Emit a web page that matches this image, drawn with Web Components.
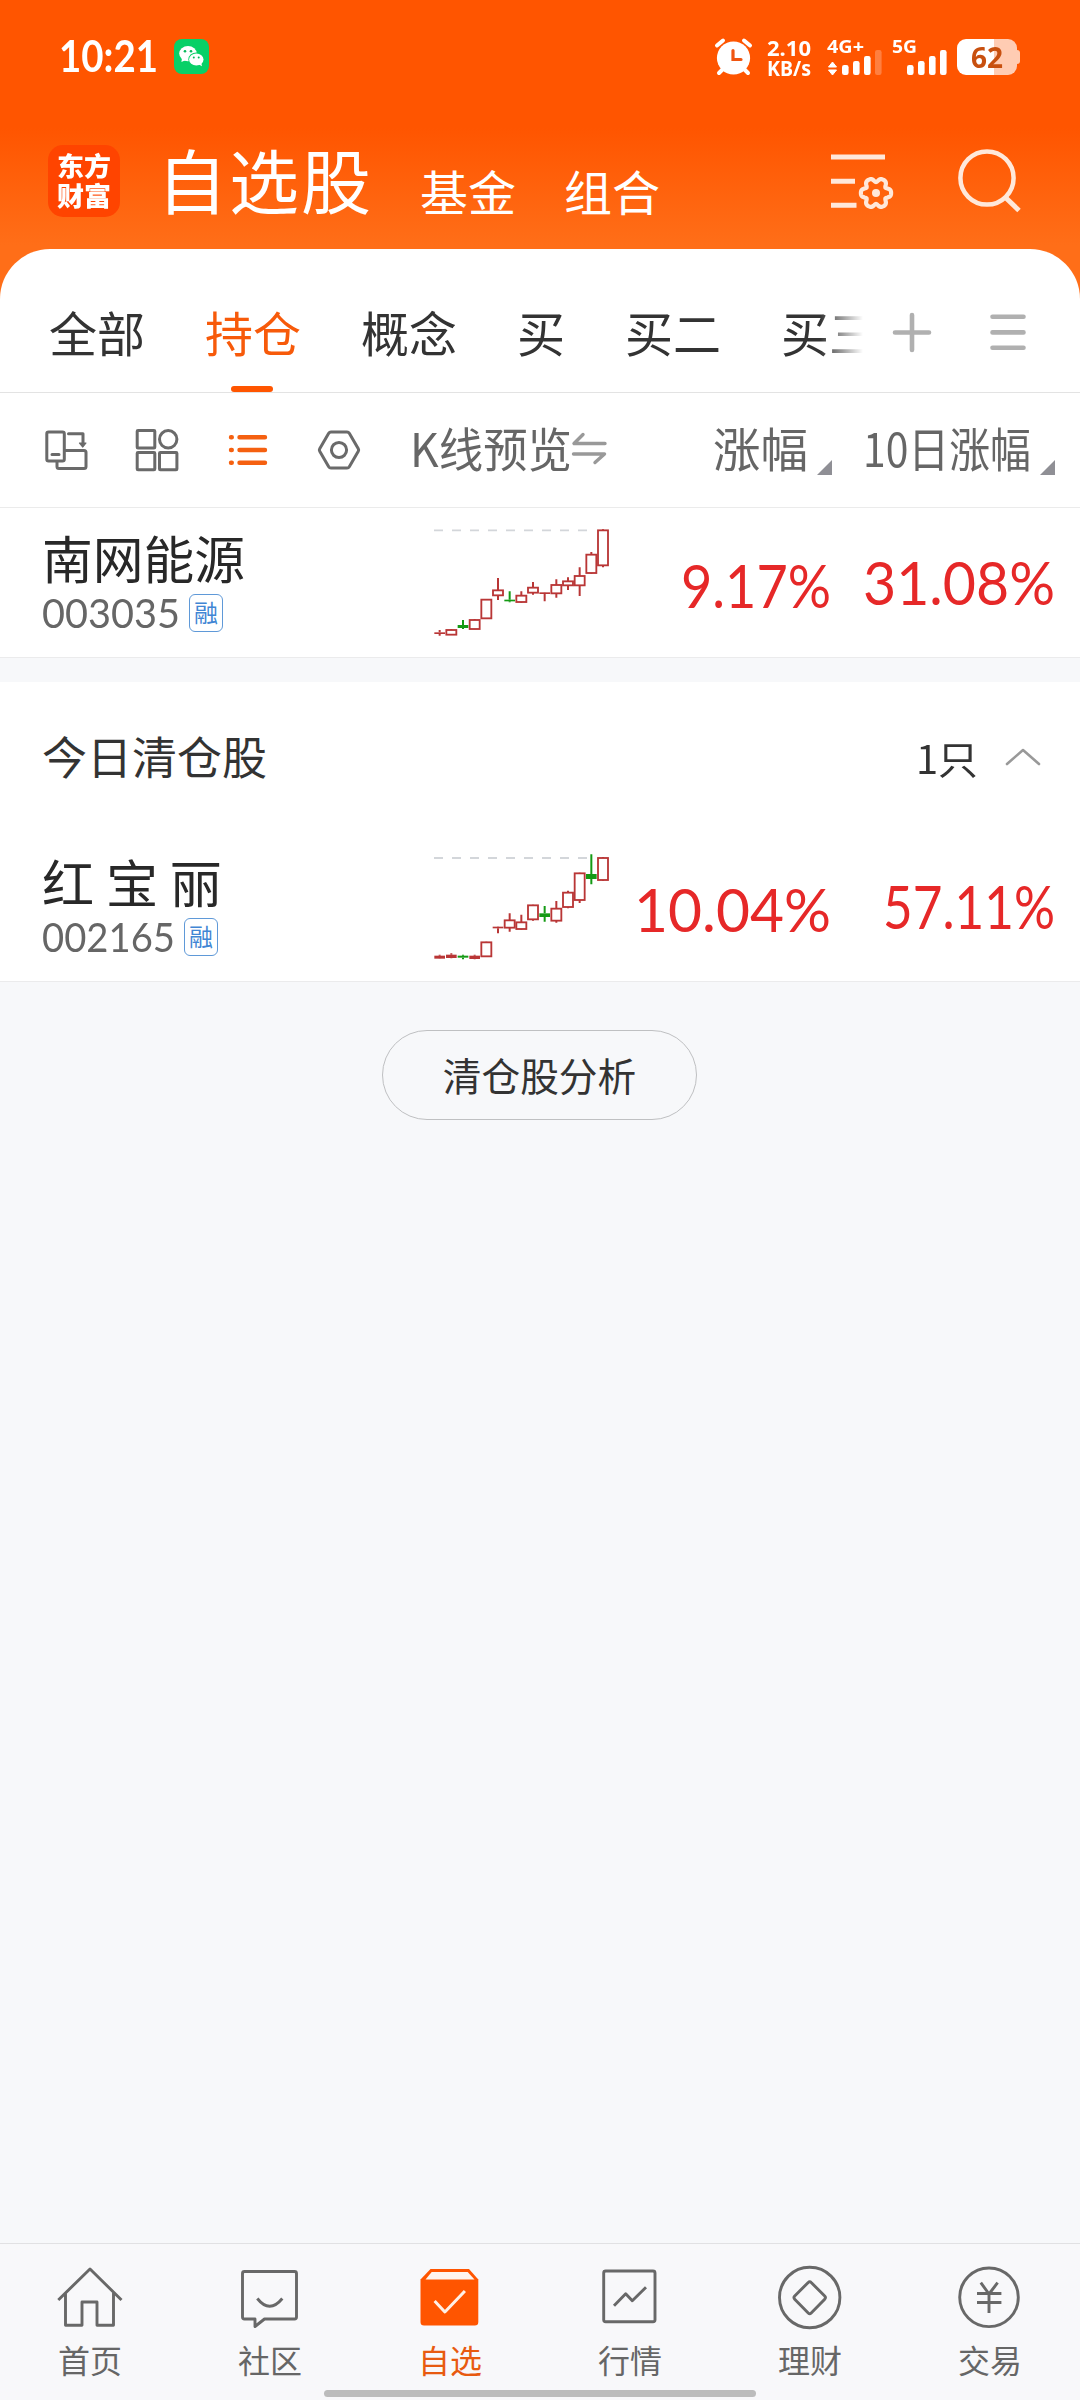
<!DOCTYPE html>
<html lang="zh-CN">
<head>
<meta charset="utf-8">
<title>自选股</title>
<style>
html,body{margin:0;padding:0}
body{width:1080px;height:2400px;overflow:hidden;background:#f7f8fa;font-family:"Noto Sans CJK SC",sans-serif;color:#333}
</style>
</head>
<body>
<stock-app></stock-app>
<script>
const CJK = '"Noto Sans CJK SC",sans-serif';
const BASE = `*{box-sizing:border-box}svg{display:block;flex:none;fill:none}`;
const ico = (x, y, w, h, body, attrs = '') =>
  `<svg width="${w}" height="${h}" viewBox="${x} ${y} ${w} ${h}" ${attrs}>${body}</svg>`;
const define = (name, html, after) => customElements.define(name, class extends HTMLElement {
  connectedCallback() {
    if (this.shadowRoot) return;
    this.attachShadow({ mode: 'open' }).innerHTML = typeof html === 'function' ? html(this) : html;
    if (after) after(this);
  }
});

/* One line of text stretched or condensed to a fixed width */
define('fit-text', el => `<style>:host{display:block;flex:none;width:${el.getAttribute('w')}px;white-space:nowrap;overflow:visible}
span{display:inline-block;transform-origin:0 50%}</style><span><slot></slot></span>`, el => {
  const s = el.shadowRoot.querySelector('span');
  const n = s.getBoundingClientRect().width;
  if (n) s.style.transform = `scaleX(${+el.getAttribute('w') / n})`;
});

const signal = (x, dim) => [[0, 65], [11, 61], [22, 56], [33, 50]].map(([dx, y], i) =>
  `<rect x="${x + dx}" y="${y}" width="6.6" height="${75 - y}" rx="2.2" fill="#fff" opacity="${dim && i === 3 ? .25 : 1}"/>`).join('');

define('status-bar', `<style>${BASE}
:host{display:flex;align-items:flex-start;height:114px;padding-left:59px;color:#fff;font-family:Lato,${CJK};font-weight:700}
.time{font-size:43px;line-height:111px}
.wx{margin:39px 0 0 16px}.alarm{margin:36px 0 0 504px}
.net{margin:37px 0 0 12px;font:700 22px/20px "Noto Sans",sans-serif}
.sig{margin-top:37px;display:flex;flex-direction:column;width:60px;font:700 18px/19px "Noto Sans",sans-serif}
.bat{display:flex;align-items:center;justify-content:center;margin:39px 0 0 10px;width:60px;height:36px;border-radius:9px;background:linear-gradient(90deg,#fff 36.5px,#ffccb3 36.5px);color:#c8500f;font:700 28px/36px "Noto Sans",sans-serif}
.nub{width:3px;height:14px;margin-top:50px;background:#ffccb3;border-radius:0 3px 3px 0}
</style>
<fit-text class="time" w="99">10:21</fit-text>
${ico(0, 0, 35, 35, `<rect width="35" height="35" rx="8" fill="#08d067"/><g fill="#fff"><ellipse cx="14" cy="14.6" rx="8.8" ry="7.6"/><path d="M8 19l-.6 4 4.5-2z"/></g><ellipse cx="22.3" cy="20.5" rx="8" ry="6.9" fill="#08d067"/><ellipse cx="22.3" cy="20.5" rx="7.2" ry="6.1" fill="#fff"/><path d="M24 25l4 2.2-.8-3.6z" fill="#fff"/><g fill="#08b95b"><circle cx="11" cy="12.3" r="1.3"/><circle cx="17" cy="12.3" r="1.3"/><circle cx="19.8" cy="18.4" r="1"/><circle cx="24.7" cy="18.4" r="1"/></g>`, 'class="wx"')}
${ico(713, 36, 42, 42, `<circle cx="733.5" cy="58" r="16.6" fill="#fff"/><path d="M717 45.5l6-5M750 45.5l-6-5M719 73l4-4M748 73l-4-4" stroke="#fff" stroke-width="4" stroke-linecap="round"/><path d="M733 50.500v9h8" stroke="#f05510" stroke-width="3.2" stroke-linecap="round"/>`, 'class="alarm"')}
<div class="net"><fit-text w="44">2.10</fit-text><fit-text w="44">KB/s</fit-text></div>
<div class="sig" style="margin-left:16px"><fit-text w="37">4G+</fit-text>
${ico(827, 49, 56, 27, `<path d="M828.500 67l4-5 4 5zM828.500 70l4 5 4-5z" fill="#fff" stroke="#fff" stroke-width="1" stroke-linejoin="round"/>` + signal(842, true), 'style="margin-top:-7px"')}</div>
<div class="sig" style="margin-left:5px;width:55px"><fit-text w="25">5G</fit-text>
${ico(892, 49, 56, 27, signal(907, false), 'style="margin-top:-7px"')}</div>
<div class="bat"><fit-text w="32">62</fit-text></div><div class="nub"></div>`);

let gear = '';
for (let i = 0; i < 120; i++) {
  const t = i * Math.PI / 60, r = 13.5 + 2.1 * Math.cos(6 * t) - .5 * Math.cos(12 * t);
  gear += (i ? 'L' : 'M') + (876 + r * Math.cos(t)).toFixed(2) + ' ' + (193 - r * Math.sin(t)).toFixed(2);
}

define('app-header', `<style>${BASE}
:host{display:flex;align-items:flex-start;height:135px;color:#fff}
.logo{width:72px;height:72px;border-radius:15px;background:#ff4400;margin:31px 0 0 48px;padding:5px 0 0 9px;font:900 26px/30px ${CJK}}
.h{font-size:70px;line-height:130px;margin-left:37px;letter-spacing:2px;width:222px}
.s{font-size:48px;line-height:153px;width:96px;margin-left:41px}
.s+.s{margin-left:48px}
.f{margin:31px 0 0 169px}.q{margin:31px 0 0 54px}
</style>
<div class="logo"><fit-text w="54">东方</fit-text><fit-text w="54">财富</fit-text></div>
<div class="h">自选股</div><div class="s">基金</div><div class="s">组合</div>
${ico(829, 145, 70, 72, `<g stroke="#ffe8da" stroke-width="5"><path d="M831 157h54M831 181.300h24M831 205.300h25.500"/><path d="${gear}Z" stroke-width="4.200"/></g><circle cx="876" cy="193" r="4" fill="#ffe8da"/>`, 'class="f"')}
${ico(953, 145, 72, 72, `<g stroke="#ffe8da" stroke-width="4.500"><circle cx="987" cy="178" r="26.600"/><path d="M1005.500 197.500L1019 210.500" stroke-width="5"/></g>`, 'class="q"')}`);

define('category-tabs', `<style>${BASE}
:host{display:flex;height:144px;border-bottom:1px solid #e3e3e3;background:#fff;border-radius:50px 50px 0 0}
.t{display:flex;gap:60px;width:863px;flex:none;padding-left:49px;overflow:hidden;white-space:nowrap;font-size:48px;line-height:165px;
-webkit-mask-image:linear-gradient(90deg,#000 820px,transparent 863px);mask-image:linear-gradient(90deg,#000 820px,transparent 863px)}
.on{color:#f75a0a;position:relative;height:143px}
.on::after{content:"";position:absolute;left:26px;bottom:0;width:42px;height:6px;border-radius:3px;background:#ff5500}
svg{margin-top:56px}
</style><div class="t"><span>全部</span><span class="on">持仓</span><span>概念</span><span>买</span><span>买二</span><span>买三</span></div>
${ico(885, 305, 54, 54, `<path d="M895 332.500h34M912 315v35" stroke="#b0b0b0" stroke-width="4.600" stroke-linecap="round"/>`, 'style="margin-left:22px"')}
${ico(981, 305, 54, 54, `<path d="M992.500 316.700h31M992.500 332.400h31M992.500 347.800h31" stroke="#b0b0b0" stroke-width="4.600" stroke-linecap="round"/>`, 'style="margin-left:42px"')}`);

define('list-toolbar', `<style>${BASE}
:host{display:flex;height:115px;background:#fff;border-bottom:1px solid #ebebeb;padding-left:40px;color:#666}
svg{margin-top:27px;stroke:#6a6a6a;stroke-width:3;stroke-linecap:round;stroke-linejoin:round}
fit-text{font-size:46.500px;line-height:107px}
i{display:block;flex:none;width:15px;height:15px;margin-top:67px;background:#8f8f95;clip-path:polygon(100% 0,100% 100%,0 100%)}
</style>
${ico(40, 420, 54, 60, `<rect x="46.800" y="432" width="17.500" height="29" rx="1.800"/><path d="M52 454.500h7M64.500 450.500h19.500q2 0 2 2v14q0 2-2 2h-25q-2 0-2-2v-5M68.500 433.800h14.500v10"/><path d="M79.500 443h6.500l-3.200 4z" fill="#6a6a6a" stroke-width="1.200"/>`)}
${ico(130, 420, 54, 60, `<rect x="137.200" y="430.500" width="17.600" height="17.600" rx=".8"/><circle cx="168.200" cy="439.300" r="8.700"/><rect x="137.200" y="452.500" width="17.600" height="17.200" rx=".8"/><rect x="159.500" y="452.500" width="17.400" height="17.200" rx=".8"/>`, 'style="margin-left:36px"')}
${ico(222, 420, 54, 60, `<path d="M231 437.300h.8M231 450h.8M231 462.700h.8M239.500 437.300h25.500M239.500 450h25.500M239.500 462.700h25.500" stroke="#f56010" stroke-width="4.400"/>`, 'style="margin-left:38px"')}
${ico(312, 420, 54, 60, `<path d="M331 432h16q1.500 0 2.300 1.300l9 15.500q.7 1.200 0 2.400l-9 15.500q-.8 1.300-2.300 1.300h-16q-1.500 0-2.300-1.300l-9-15.500q-.7-1.200 0-2.400l9-15.500q.8-1.300 2.300-1.300z"/><circle cx="339" cy="450" r="7.600"/>`, 'style="margin-left:36px"')}
<fit-text w="162" style="margin-left:44px">K线预览</fit-text>
${ico(571, 420, 38, 60, `<path d="M583 434.500l-9 9h31M595 462.500l9.500-8.500h-31" stroke="#999" stroke-width="3.400"/>`, 'style="margin-left:-1px"')}
<fit-text w="95" style="margin-left:104px">涨幅</fit-text><i style="margin-left:9px"></i>
<fit-text w="168" style="margin-left:31px">10日涨幅</fit-text><i style="margin-left:9px"></i>`);

/* Candles: [x, high, low, bodyTop, bodyBottom, kind]; r = hollow red, s = solid red, g = solid green */
const CHARTS = {
  a: { y: 91, top: 24, k: [
    [119,390,407,397,402,'s'],[154,387,405,390,404,'r'],[189,360,387,375,384,'g'],[224,357,388,360,387,'r'],[259,297,357,299,355,'r'],
    [294,234,300,271,286,'r'],[329,274,307,299,304,'g'],[364,274,308,287,306,'r'],[399,246,284,263,278,'r'],[434,276,304,277,282,'s'],
    [469,238,293,255,280,'r'],[504,232,270,244,256,'r'],[539,202,288,228,256,'r'],[574,156,221,164,219,'r'],[609,88,202,91,196,'r']] },
  b: { y: 84, top: 6, k: [
    [119,374,387,377,386,'s'],[154,370,385,374,384,'s'],[189,374,388,377,383,'g'],[224,374,388,377,387,'s'],[259,335,380,337,379,'r'],
    [294,291,310,290,295,'s'],[329,250,305,271,293,'r'],[364,254,299,277,297,'r'],[399,224,272,226,268,'r'],[434,228,275,250,261,'g'],
    [469,213,278,236,272,'r'],[504,182,235,188,231,'r'],[539,128,219,130,210,'r'],[574,73,163,132,147,'g'],[609,81,152,84,150,'r']] }
};
define('k-line', el => {
  const c = CHARTS[el.getAttribute('data')];
  const body = c.k.map(([x, h, l, t, b, k]) => {
    const col = k === 'g' ? '#149a14' : '#b93636';
    const wick = `<path d="M${x} ${h}V${t}M${x} ${b}V${l}" stroke="${col}" stroke-width="6"/>`;
    return wick + (k === 'r'
      ? `<rect x="${x - 15}" y="${t}" width="30" height="${b - t}" stroke="${col}" stroke-width="5.500"/>`
      : `<rect x="${x - 16}" y="${t}" width="32" height="${b - t}" fill="${col}"/>`);
  }).join('');
  return `<style>${BASE}:host{display:block;flex:none}</style>
  <svg width="260" height="149" viewBox="0 ${c.top} 780 447"><path d="M102 ${c.y}H562" stroke="#d3d6da" stroke-width="5.500" stroke-dasharray="27 27"/>${body}</svg>`;
});

define('stock-row', el => {
  const a = n => el.getAttribute(n);
  return `<style>${BASE}
:host{display:flex;height:150px;background:#fff;border-bottom:1px solid #ebebec}
.id{width:400px;flex:none;padding:19px 0 0 42px}
.nm{font-size:51px;line-height:60px;color:#282828;white-space:pre}
.c{display:flex;align-items:center;height:51px;color:#666;font:400 41px/51px Lato,${CJK}}
.tag{width:34px;height:38px;margin-left:9px;border:1.500px solid #5f99d8;border-radius:6px;color:#4186d4;font:400 24px/33px ${CJK};text-align:center}
.v{display:flex;color:#e62828;font-family:Lato,sans-serif;font-size:60px;flex:none;width:480px;margin-left:-60px;justify-content:flex-end;padding-right:25px}
</style><div class="id"><fit-text class="nm" w="${a('nw')}">${a('name')}</fit-text>
<div class="c"><fit-text w="${a('cw')}">${a('code')}</fit-text><span class="tag">融</span></div></div>
<k-line data="${a('chart')}"></k-line>
<div class="v"><fit-text w="${a('w1')}" style="line-height:154px">${a('p1')}</fit-text>
<fit-text w="${a('w2')}" style="line-height:148px;margin-left:${a('gap')}px">${a('p2')}</fit-text></div>`;
});

define('section-head', `<style>${BASE}
:host{display:flex;height:150px;background:#fff;margin-top:24px;padding-left:42px;color:#333}
.t{font-size:45px;line-height:148px;flex:1}
fit-text{font-size:39px;line-height:150px}
svg{margin:57px 34px 0 22px}
</style><div class="t">今日清仓股</div><fit-text w="62">1只</fit-text>
${ico(1000, 739, 46, 36, `<path d="M1007 764l16-14 16 14" stroke="#999" stroke-width="2.600" stroke-linecap="round" stroke-linejoin="round"/>`)}`);

define('pill-button', `<style>${BASE}
:host{display:flex;align-items:flex-start;justify-content:center;box-sizing:border-box;width:315px;height:90px;margin:48px 0 0 382px;border:1px solid #bfc0c2;border-radius:45px;font-size:38.700px;line-height:86px;color:#333}
</style><slot></slot>`);

define('nav-item', el => `<style>${BASE}
:host{display:flex;flex-direction:column;align-items:center;width:180px;padding-top:16px;color:#666;font-size:32px;line-height:40px}
:host([on]){color:#e85a10}
svg{margin-bottom:9px;stroke:#686868;stroke-width:2.900;stroke-linejoin:round}
</style>${ico(0, 0, 180, 70, NAV[el.getAttribute('icon')])}<slot></slot>`);
const NAV = {
  home: `<path d="M58.300 40L90 9l31.500 31M65.500 33v32.300h16.500V42h15v23.300h16.500V33"/>`,
  chat: `<path d="M64.500 11.500h50q2 0 2 2V57q0 2-2 2H84.500l-9.500 7.500V59H64.500q-2 0-2-2V13.500q0-2 2-2z"/><path d="M77.300 38.500q12.300 15.500 25 0"/>`,
  pick: `<path d="M60.500 19.500L70.500 9h38.500l9.300 10.500V62q0 3.500-3.500 3.500H64q-3.500 0-3.500-3.500z" fill="#ff5500" stroke="none"/><path d="M71.700 12h36l6.800 7.400H65.500z" fill="#fff5ee" stroke="none"/><path d="M74.600 41l10.300 11 20-21" stroke="#fff0e6" stroke-width="3"/>`,
  market: `<rect x="63.700" y="11" width="51.300" height="50.700" rx="2"/><path d="M74 45.700l11.700-12 6.600 7L106 27.300"/>`,
  wealth: `<circle cx="89.700" cy="37.500" r="30.200"/><path d="M88.200 22.500q1.500-1.600 3 0l13.500 13.500q1.500 1.600 0 3.200L91.200 53q-1.500 1.500-3 0L74.700 39.200q-1.500-1.600 0-3.200z"/>`,
  trade: `<circle cx="89" cy="37.300" r="29.300"/><path d="M80.800 22.700L89 34l8.600-11.300M77 33.500h24.400M77 42.500h24.400M89 33.500V53"/>`
};

define('bottom-nav', `<style>${BASE}
:host{display:flex;flex-direction:column;box-sizing:border-box;height:157px;border-top:1px solid #e1e1e3;background:#f8f8fa}
.r{display:flex}
.bar{width:432px;height:7px;border-radius:4px;background:#bcbcbc;margin:11px auto 0}
</style><div class="r"><nav-item icon="home">首页</nav-item><nav-item icon="chat">社区</nav-item><nav-item icon="pick" on>自选</nav-item><nav-item icon="market">行情</nav-item><nav-item icon="wealth">理财</nav-item><nav-item icon="trade">交易</nav-item></div><div class="bar"></div>`);

/* The hosts' heights count their hairline borders */
define('stock-app', `<style>${BASE}
:host{display:flex;flex-direction:column;width:1080px;height:2400px;background:linear-gradient(#ff5500 128px,#ff6e18 245px,#ff6e18 320px,#f7f8fa 320px)}
main{flex:1}
</style><status-bar></status-bar><app-header></app-header><category-tabs style="box-sizing:border-box"></category-tabs><list-toolbar style="box-sizing:border-box"></list-toolbar>
<main>
<stock-row style="box-sizing:border-box" name="南网能源" nw="203" code="003035" cw="138" chart="a" p1="9.17%" w1="150" p2="31.08%" w2="192" gap="32"></stock-row>
<section-head></section-head>
<stock-row style="box-sizing:border-box" name="红 宝 丽" nw="180" code="002165" cw="133" chart="b" p1="10.04%" w1="197" p2="57.11%" w2="172" gap="52"></stock-row>
<pill-button>清仓股分析</pill-button>
</main><bottom-nav></bottom-nav>`);
</script>
</body>
</html>
